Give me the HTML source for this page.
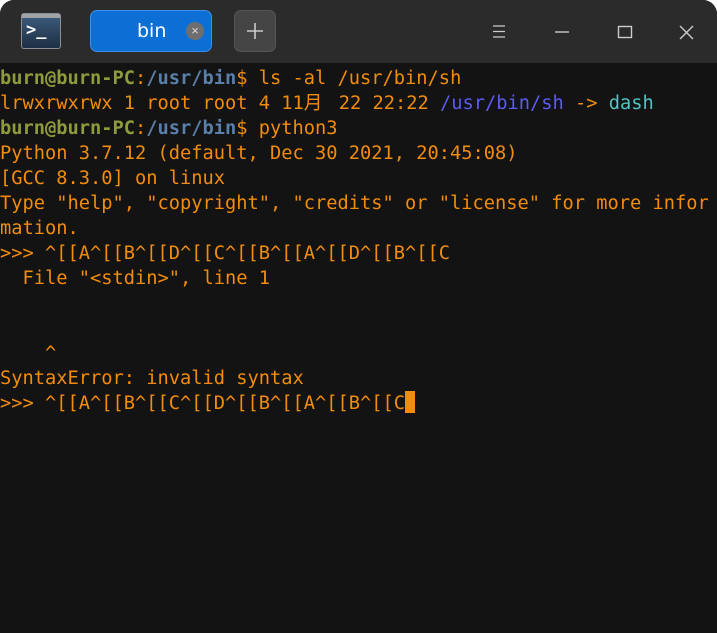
<!DOCTYPE html>
<html><head><meta charset="utf-8"><style>
html,body{margin:0;padding:0;background:#fff;}
.win{position:absolute;left:0;top:0;width:717px;height:633px;background:#131313;border-radius:14px 14px 0 0;overflow:hidden;}
.hdr{position:absolute;left:0;top:0;width:717px;height:63px;background:#2b2b2b;}
.term{position:absolute;left:0;top:66px;font-family:"DejaVu Sans Mono","Noto Sans CJK SC",monospace;font-size:18.7px;line-height:25px;color:#f28c0c;white-space:pre;}
.u{color:#8f9a3c;font-weight:bold}
.p{color:#5a7fa8;font-weight:bold}
.b{color:#5c5cf0}
.c{color:#4fc4c4}
.cur{display:inline-block;width:10px;height:22px;background:#f28c0c;vertical-align:-4px;}
</style></head><body>
<div class="win">
<div class="hdr">
 <div style="position:absolute;left:21px;top:13px;width:40px;height:36px;border-radius:3px;background:linear-gradient(#3d5d80,#1e2f44);border:1px solid #8a8f95;box-sizing:border-box;">
  <div style="position:absolute;left:0;top:0;right:0;height:4px;background:#a0a4a8"></div>
  <div style="position:absolute;left:4px;top:6px;color:#fff;font:bold 17px 'DejaVu Sans Mono',monospace;">&gt;_</div>
 </div>
 <div style="position:absolute;left:90px;top:10px;width:122px;height:42px;background:#0b6fd6;border-radius:7px;border:1px solid #3d8fe8;box-sizing:border-box;">
  <div style="position:absolute;left:46px;top:9px;color:#fff;font:19px 'DejaVu Sans',sans-serif;">bin</div>
  <div style="position:absolute;left:95px;top:11px;width:18px;height:18px;border-radius:50%;background:#6e6e6e;color:#ddd;font:13px 'Liberation Sans',sans-serif;text-align:center;line-height:18px;">×</div>
 </div>
 <div style="position:absolute;left:234px;top:10px;width:42px;height:42px;background:#454545;border:1px solid #555;border-radius:7px;box-sizing:border-box;">
  <svg width="40" height="40" style="position:absolute;left:0;top:0"><path d="M20 12v16M12 20h16" stroke="#ccc" stroke-width="1.6"/></svg>
 </div>
 <svg width="717" height="63" style="position:absolute;left:0;top:0">
  <path d="M493 26h12M493 31.5h12M493 37h12" stroke="#ccc" stroke-width="1.2"/>
  <path d="M555 32h14" stroke="#ccc" stroke-width="1.4"/>
  <rect x="618.5" y="26.5" width="13" height="11" fill="none" stroke="#ccc" stroke-width="1.4"/>
  <path d="M680 26l13 13M693 26l-13 13" stroke="#ccc" stroke-width="1.4"/>
 </svg>
</div>
<div class="term"><span class="u">burn@burn-PC</span>:<span class="p">/usr/bin</span>$ ls -al /usr/bin/sh
lrwxrwxrwx 1 root root 4 11<span style="margin-right:5px">月</span> 22 22:22 <span class="b">/usr/bin/sh</span> -&gt; <span class="c">dash</span>
<span class="u">burn@burn-PC</span>:<span class="p">/usr/bin</span>$ python3
Python 3.7.12 (default, Dec 30 2021, 20:45:08)
[GCC 8.3.0] on linux
Type "help", "copyright", "credits" or "license" for more infor
mation.
&gt;&gt;&gt; ^[[A^[[B^[[D^[[C^[[B^[[A^[[D^[[B^[[C
  File "&lt;stdin&gt;", line 1


    ^
SyntaxError: invalid syntax
&gt;&gt;&gt; ^[[A^[[B^[[C^[[D^[[B^[[A^[[B^[[C<span class="cur"></span></div>
</div>
</body></html>
